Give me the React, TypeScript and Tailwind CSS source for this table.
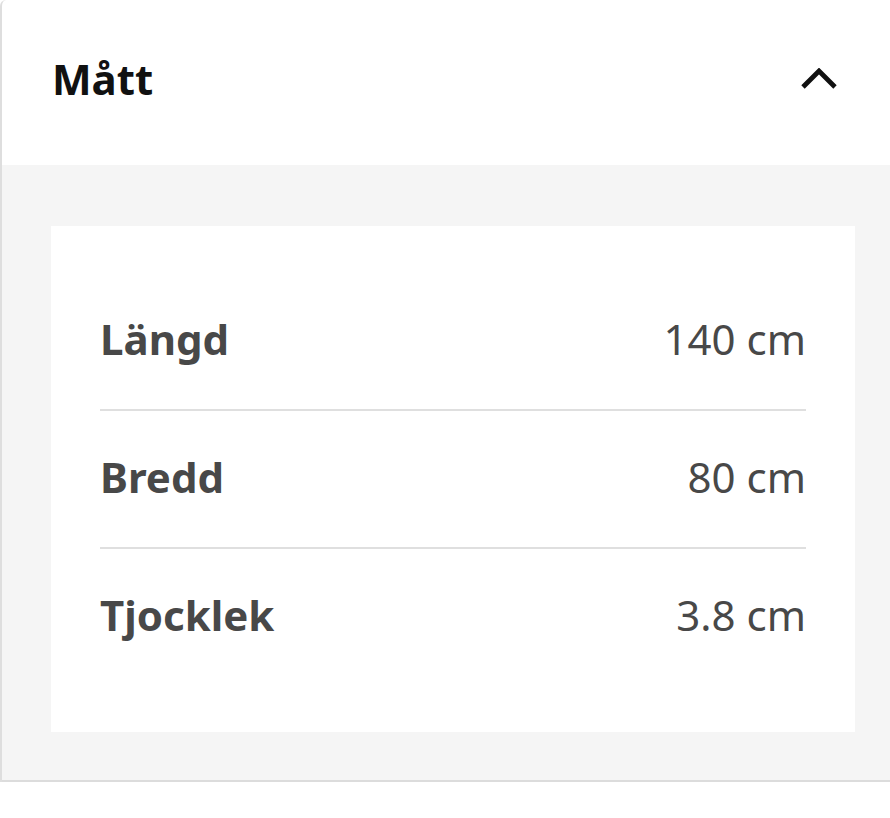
import React from 'react';

const rows = [
  { label: 'Längd', value: '140 cm' },
  { label: 'Bredd', value: '80 cm' },
  { label: 'Tjocklek', value: '3.8 cm' },
];

function ChevronUp() {
  return (
    <svg width="36" height="22" viewBox="0 0 36 22" fill="none" aria-hidden="true">
      <polyline points="2,19 18,3 34,19" stroke="#111111" strokeWidth="4.8" strokeLinecap="butt" strokeLinejoin="miter" />
    </svg>
  );
}

export default function App() {
  return (
    <div className="min-h-screen bg-white font-['Noto_Sans',sans-serif]">
      <div className="border-l-2 border-[#dedede] rounded-tl-[6px]">
        <div className="h-[165px] flex items-center justify-between pl-[50px] pr-[53px] pb-[8px]">
          <h2 className="text-[42px] font-bold text-[#111111] leading-[56px]">Mått</h2>
          <ChevronUp />
        </div>

        <div className="bg-[#f5f5f5] pl-[49px] pr-[35px] pt-[61px] pb-[48px] border-b-2 border-[#dcdcdc]">
          <div className="bg-white px-[49px] pt-[47px] pb-[47px]">
            <div className="flex flex-col divide-y-2 divide-[#dfdfdf]">
              {rows.map((r) => (
                <div key={r.label} className="box-content h-[131px] pb-[5px] flex items-center justify-between text-[#484848] text-[42px] leading-[56px]">
                  <span className="font-bold">{r.label}</span>
                  <span>{r.value}</span>
                </div>
              ))}
            </div>
          </div>
        </div>
      </div>
    </div>
  );
}
